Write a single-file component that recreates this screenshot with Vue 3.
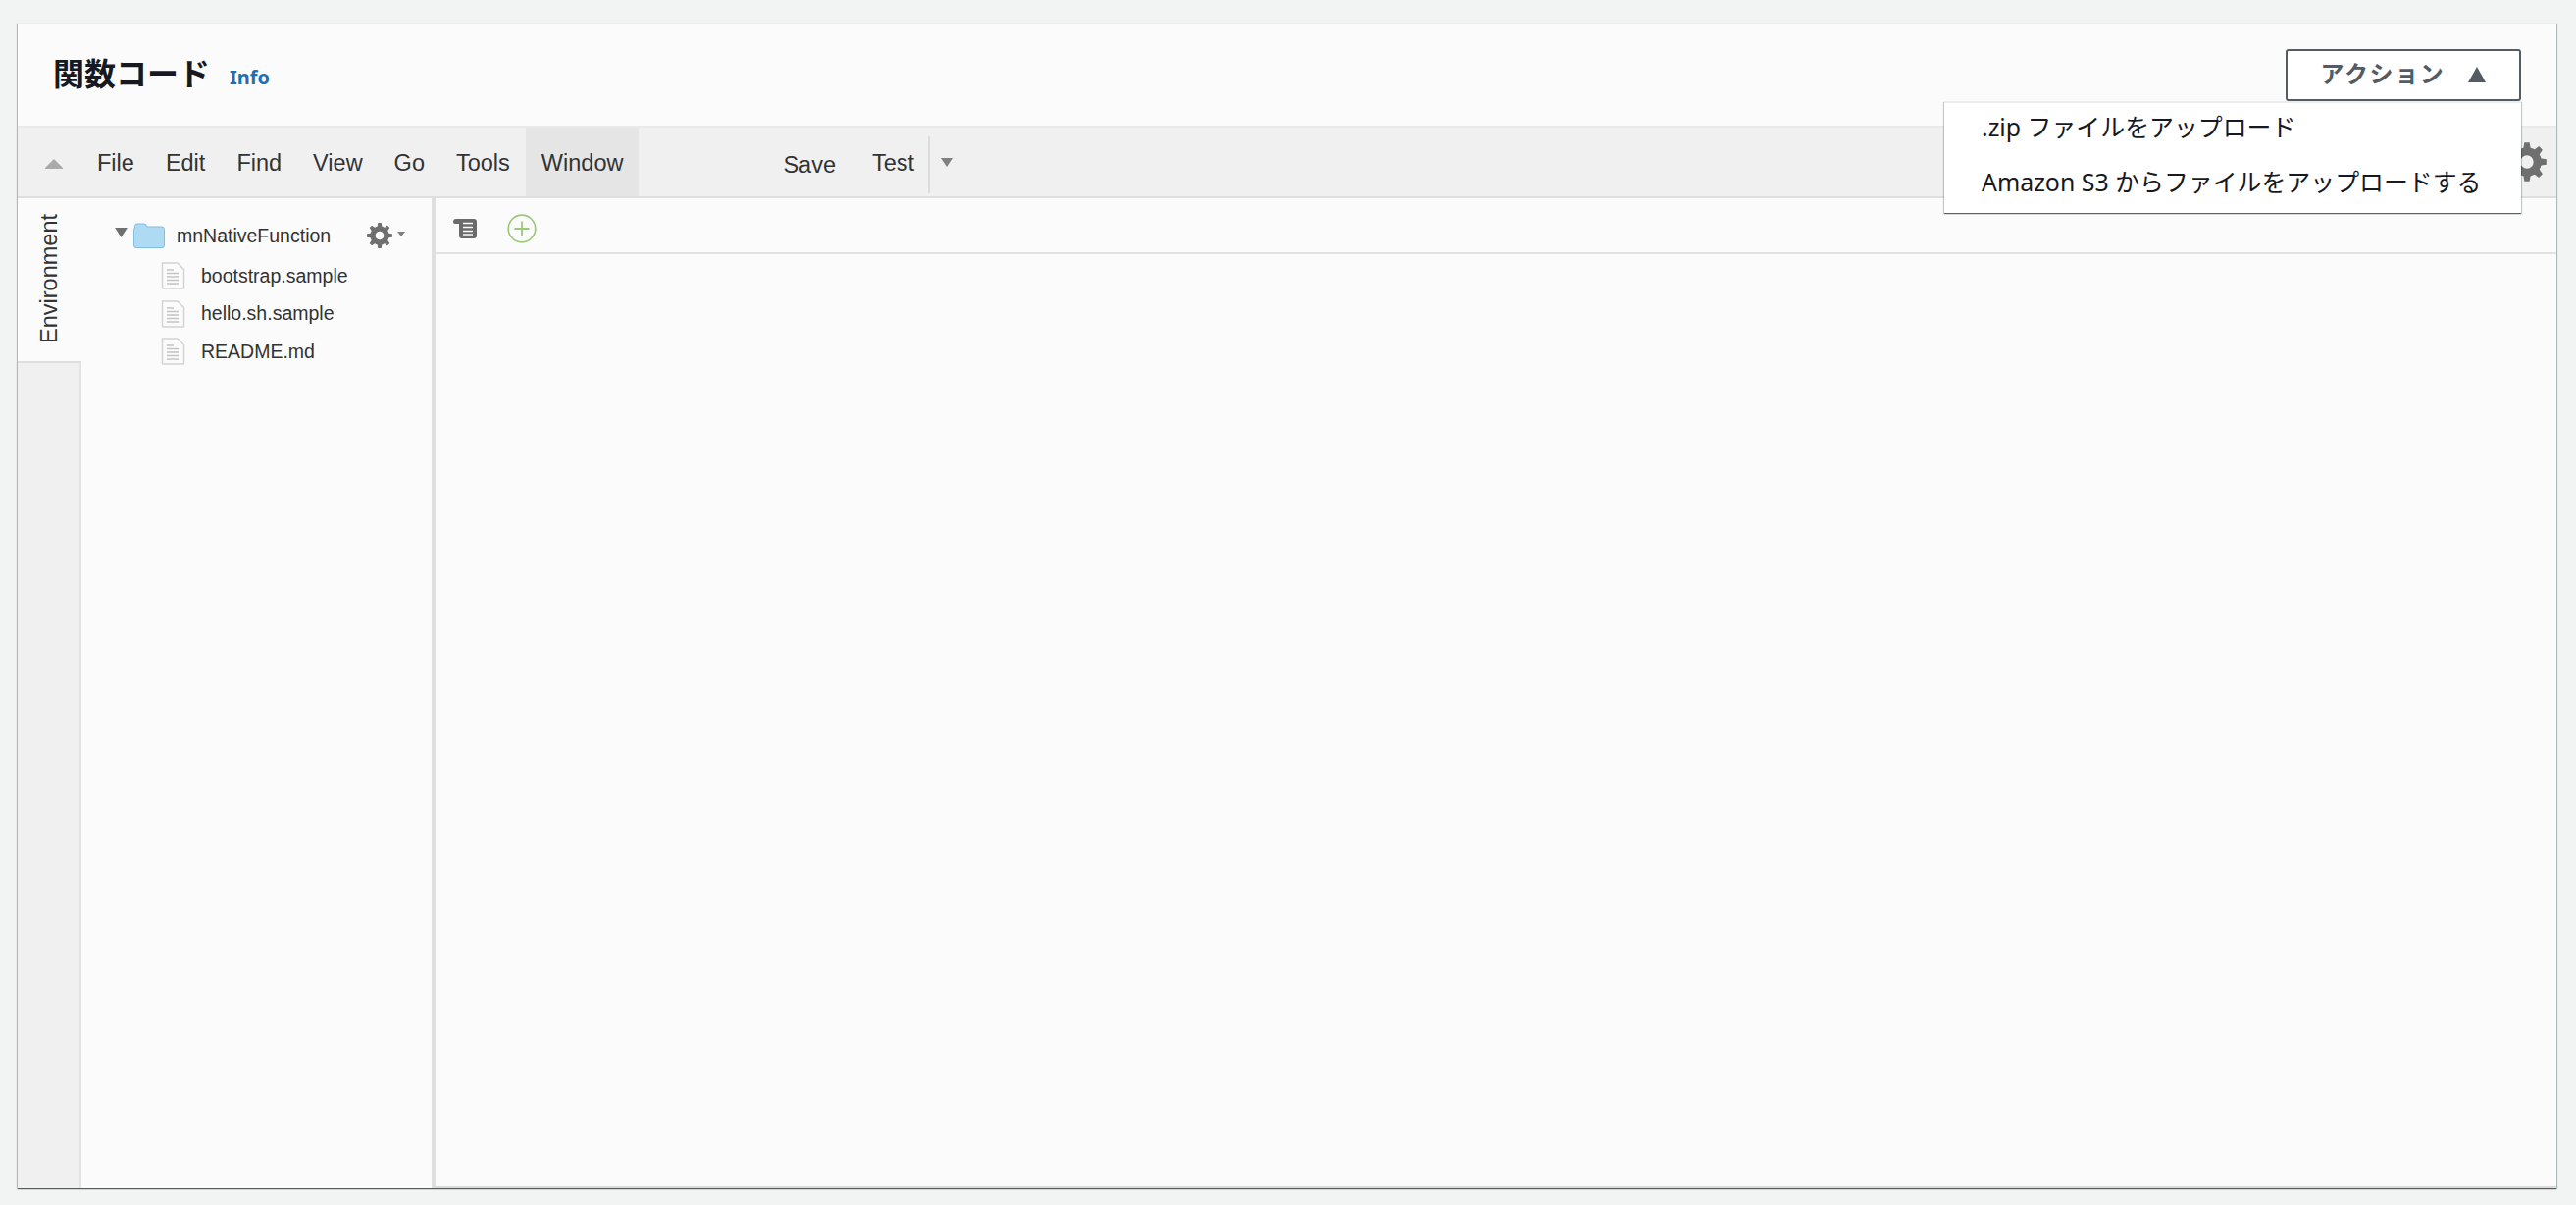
<script setup>
const menus = ['File', 'Edit', 'Find', 'View', 'Go', 'Tools', 'Window']
const files = ['bootstrap.sample', 'hello.sh.sample', 'README.md']

function gearPath(teeth = 8, outer = 12, inner = 9) {
  const cmds = []
  const step = (Math.PI * 2) / teeth
  for (let i = 0; i < teeth; i++) {
    const a = i * step - Math.PI / 2
    const pts = [
      [inner, a - step * 0.3],
      [outer, a - step * 0.17],
      [outer, a + step * 0.17],
      [inner, a + step * 0.3]
    ]
    pts.forEach(([r, t], j) => {
      const x = (12 + r * Math.cos(t)).toFixed(2)
      const y = (12 + r * Math.sin(t)).toFixed(2)
      cmds.push(`${i === 0 && j === 0 ? 'M' : 'L'}${x} ${y}`)
    })
  }
  cmds.push('Z M12 8a4 4 0 1 0 0 8a4 4 0 1 0 0-8Z')
  return cmds.join(' ')
}
const gear = gearPath()
</script>

<template>
  <div class="page">
    <section class="card">
      <header class="head">
        <h2 class="title">関数コード</h2>
        <a class="info">Info</a>
        <div class="actions">
          <button class="action-btn">
            <span>アクション</span>
            <svg class="action-tri" viewBox="0 0 18 16"><path d="M9 0L18 16H0Z" /></svg>
          </button>
          <ul class="dropdown">
            <li>.zip ファイルをアップロード</li>
            <li>Amazon S3 からファイルをアップロードする</li>
          </ul>
        </div>
      </header>

      <div class="menubar">
        <svg class="collapse" viewBox="0 0 18 10"><path d="M9 0L18 9V10H0V9Z" /></svg>
        <nav class="menus">
          <span v-for="m in menus" :key="m" class="menu" :class="{ active: m === 'Window' }">{{ m }}</span>
        </nav>
        <span class="save">Save</span>
        <span class="test">Test</span>
        <span class="sep"></span>
        <svg class="test-caret" viewBox="0 0 12 9"><path d="M0 0H12L6 9Z" /></svg>
        <svg class="big-gear" viewBox="0 0 24 24"><path :d="gear" fill-rule="evenodd" /></svg>
      </div>

      <div class="ide">
        <aside class="rail">
          <div class="env-tab"><span class="env-label">Environment</span></div>
        </aside>

        <div class="tree">
          <div class="root">
            <svg class="root-caret" viewBox="0 0 14 11"><path d="M0 0H14L7 11Z" /></svg>
            <svg class="folder" viewBox="0 0 32 26">
              <path d="M1.5 5V3.5A2.5 2.5 0 0 1 4 1h7a2.5 2.5 0 0 1 2.5 2.5V4H29a2.5 2.5 0 0 1 2.5 2.5V23a2.5 2.5 0 0 1-2.500 2.500H3A2.500 2.500 0 0 1 .5 23V7.500A2.500 2.500 0 0 1 1.500 5Z" fill="#aedaf3" stroke="#7fbfe3" stroke-width="1" />
            </svg>
            <span class="root-name">mnNativeFunction</span>
            <svg class="tree-gear" viewBox="0 0 24 24"><path :d="gear" fill-rule="evenodd" /></svg>
            <svg class="tree-gear-caret" viewBox="0 0 8 5"><path d="M0 0H8L4 5Z" /></svg>
          </div>
          <div class="files">
            <div v-for="f in files" :key="f" class="file">
              <svg class="file-icon" viewBox="0 0 25 28">
                <path d="M1.500 1H17l6.500 6.500V26.500a.5.5 0 0 1-.5.5H2a.5.5 0 0 1-.5-.5Z" fill="#fbfbfb" stroke="#d4d4d4" stroke-width="1.500" />
                <path d="M6 8h7M6 11.500h12M6 15h12M6 18.500h12M6 22h12" stroke="#c4c4c4" stroke-width="1.300" fill="none" />
              </svg>
              <span class="file-name">{{ f }}</span>
            </div>
          </div>
        </div>

        <main class="editor">
          <div class="editor-bar">
            <svg class="scroll-icon" viewBox="0 0 24 20">
              <path d="M3 0H21a3 3 0 0 1 3 3V17a3 3 0 0 1-3 3H9a3 3 0 0 1-3-3V5H2a2 2 0 0 1-2-2a3 3 0 0 1 3-3Z" fill="#6b6b6b" />
              <path d="M10 4.500h10M10 8.500h10M10 12.500h10M10 16h10" stroke="#fbfbfb" stroke-width="1.600" />
            </svg>
            <svg class="plus-icon" viewBox="0 0 30 30">
              <circle cx="15" cy="15" r="13.800" fill="none" stroke="#9bc979" stroke-width="1.700" />
              <path d="M15 7.500V22.500M7.500 15H22.500" stroke="#9bc979" stroke-width="1.800" />
            </svg>
          </div>
          <div class="editor-body"></div>
        </main>
      </div>
    </section>
  </div>
</template>

<style>
html, body { margin: 0; background: #f2f3f3; overflow: hidden; }
</style>

<style scoped>
.page {
  width: 2626px;
  height: 1228px;
  box-sizing: border-box;
  padding: 23px 20px 18px 18px;
  background: #f2f3f3;
  font-family: "Liberation Sans", Arial, "Noto Sans CJK JP", sans-serif;
  color: #333;
}
.card {
  height: 100%;
  display: flex;
  flex-direction: column;
  background: #fbfbfb;
  box-shadow: 0 1px 1px 0 rgba(0, 28, 36, 0.5), 1px 1px 1px 0 rgba(0, 28, 36, 0.2), -1px 1px 1px 0 rgba(0, 28, 36, 0.2);
  border-top: 1px solid #eaeded;
}
.head {
  height: 104px;
  flex: none;
  display: flex;
  align-items: center;
  padding: 0 37px;
  border-bottom: 2px solid #eaeaea;
  box-sizing: content-box;
  position: relative;
  z-index: 2;
}
.title {
  margin: -6px 0 0 -1px;
  font: 700 32px "Noto Sans CJK JP", sans-serif;
  color: #16191f;
}
.info {
  margin: 4px 0 0 20px;
  font: 700 20px "Noto Sans", sans-serif;
  color: #1f6fb5;
}
.actions { margin: 1px -1px 0 auto; position: relative; height: 53px; }
.action-btn {
  width: 240px;
  height: 53px;
  display: flex;
  align-items: center;
  justify-content: center;
  gap: 24px;
  background: #fff;
  border: 2px solid #545b64;
  border-radius: 3px;
  padding: 0 0 7px;
  font: 700 24px "Noto Sans CJK JP", sans-serif;
  letter-spacing: 1.600px;
  color: #545b64;
}
.action-tri { width: 18px; height: 16px; fill: #545b64; margin-top: 5px; }
.dropdown {
  position: absolute;
  top: 53px;
  right: 0;
  width: 588px;
  height: 114px;
  box-sizing: border-box;
  margin: 0;
  padding: 0;
  list-style: none;
  background: #fff;
  border-top: 2px solid #eaeded;
  box-shadow: 0 1px 1px 0 rgba(0, 28, 36, 0.55), 1px 1px 1px 0 rgba(0, 28, 36, 0.15), -1px 1px 1px 0 rgba(0, 28, 36, 0.15);
  font: 400 24.900px "Noto Sans", "Noto Sans CJK JP", sans-serif;
  color: #16191f;
}
.dropdown li {
  height: 56px;
  padding-left: 38px;
  line-height: 48px;
  white-space: nowrap;
}
.menubar {
  height: 70px;
  flex: none;
  display: flex;
  align-items: center;
  background: #f0f0f0;
  border-bottom: 2px solid #dfdfdf;
  position: relative;
}
.collapse { width: 18px; height: 10px; fill: #aaa; margin: 4px 0 0 28px; }
.menus { display: flex; height: 100%; margin-left: 19px; }
.menu {
  padding: 2px 16px 0;
  display: flex;
  align-items: center;
  font-size: 23.500px;
  color: #333;
}
.menu.active { background: #e5e5e5; }
.save { margin-left: 147px; margin-top: 6px; font-size: 23.500px; }
.test { margin-left: 37px; margin-top: 2px; font-size: 23.500px; }
.sep { width: 2px; height: 58px; margin: 6px 0 0 14px; background: #dcdcdc; }
.test-caret { width: 12px; height: 9px; fill: #808080; margin-left: 11px; }
.big-gear { width: 40px; height: 40px; fill: #6f6f6f; margin-left: auto; margin-right: 10px; }
.ide { flex: 1; min-height: 0; display: flex; }
.rail {
  width: 63px;
  flex: none;
  background: #f0f0f0;
  border-right: 2px solid #e3e3e3;
}
.env-tab {
  height: 168px;
  margin-right: -2px;
  background: #fbfbfb;
  border-bottom: 2px solid #dfdfdf;
  display: flex;
  align-items: flex-start;
  justify-content: center;
  box-sizing: border-box;
  padding-top: 16px;
}
.env-label {
  writing-mode: vertical-rl;
  transform: rotate(180deg);
  font-size: 23.500px;
  color: #333;
}
.tree {
  width: 357px;
  flex: none;
  box-sizing: border-box;
  padding: 24px 0 0 34px;
  background: #fbfbfb;
}
.root { height: 28px; display: flex; align-items: center; }
.root-caret { width: 13px; height: 10px; fill: #707070; margin: -6px 0 0 0; flex: none; }
.folder { width: 32px; height: 26px; margin-left: 6px; flex: none; }
.root-name { margin-left: 12px; font-size: 19.500px; width: 194px; color: #333; white-space: nowrap; }
.tree-gear { width: 26px; height: 26px; fill: #6f6f6f; flex: none; }
.tree-gear-caret { width: 8px; height: 5px; fill: #808080; margin: -4px 0 0 5px; flex: none; }
.files { margin-top: 8px; }
.file {
  height: 38.500px;
  display: flex;
  align-items: center;
  padding-left: 47px;
}
.file-icon { width: 25px; height: 28px; flex: none; }
.file-name { margin-left: 16px; font-size: 19.500px; color: #333; white-space: nowrap; }
.editor {
  flex: 1;
  min-width: 0;
  display: flex;
  flex-direction: column;
  border-left: 4px solid #dfdfdf;
  border-bottom: 2px solid #dadada;
  background: #fbfbfb;
}
.editor-bar {
  height: 57px;
  flex: none;
  display: flex;
  align-items: center;
  padding: 6px 0 0 18px;
  border-bottom: 2px solid #e3e3e3;
  box-sizing: border-box;
}
.scroll-icon { width: 24px; height: 20px; }
.plus-icon { width: 30px; height: 30px; margin-left: 31px; }
.editor-body { flex: 1; }
</style>
